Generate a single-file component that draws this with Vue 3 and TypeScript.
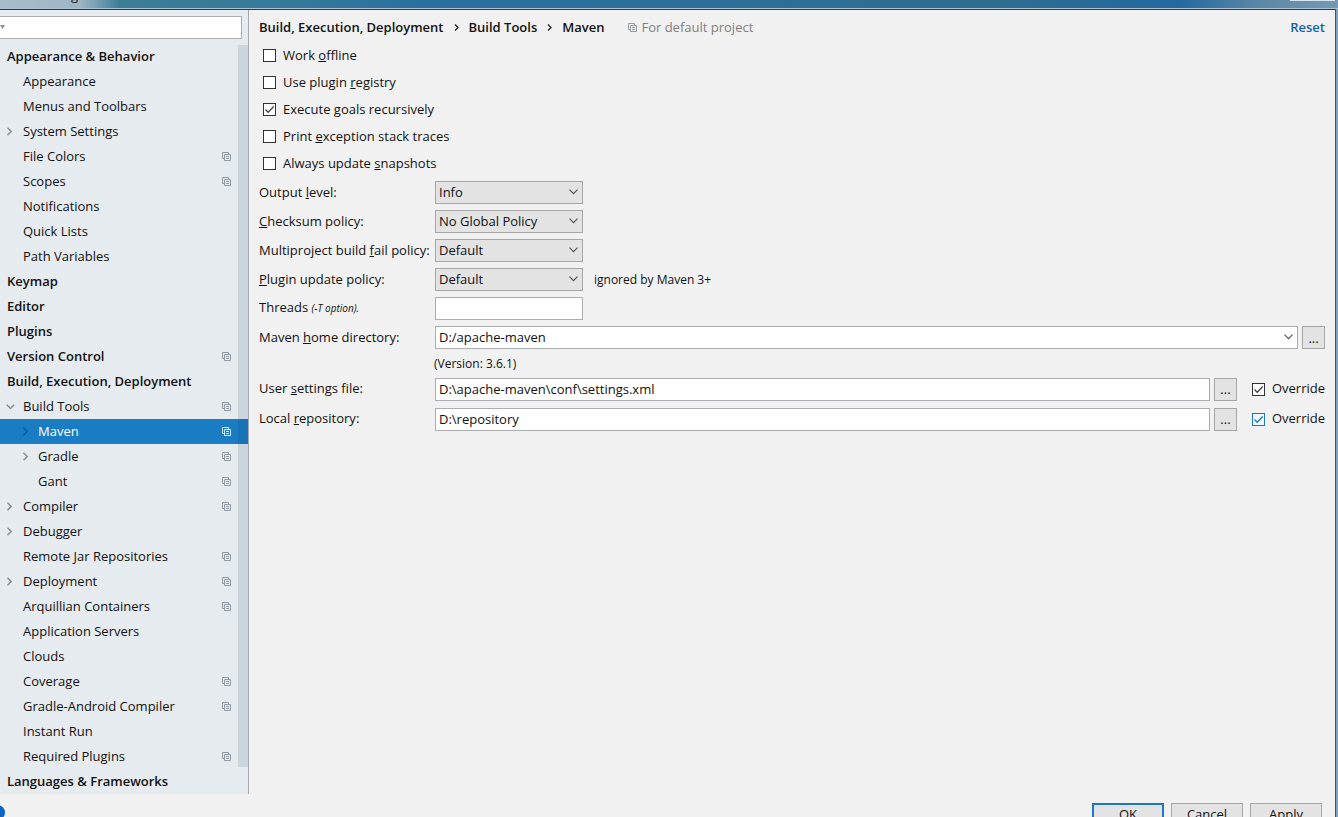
<script setup lang="ts">
import { ref } from 'vue'

interface TreeItem {
  label: string
  level: 0 | 1 | 2
  arrow?: 'right' | 'down'
  project?: boolean
  selected?: boolean
}

const items: TreeItem[] = [
  { label: 'Appearance & Behavior', level: 0 },
  { label: 'Appearance', level: 1 },
  { label: 'Menus and Toolbars', level: 1 },
  { label: 'System Settings', level: 1, arrow: 'right' },
  { label: 'File Colors', level: 1, project: true },
  { label: 'Scopes', level: 1, project: true },
  { label: 'Notifications', level: 1 },
  { label: 'Quick Lists', level: 1 },
  { label: 'Path Variables', level: 1 },
  { label: 'Keymap', level: 0 },
  { label: 'Editor', level: 0 },
  { label: 'Plugins', level: 0 },
  { label: 'Version Control', level: 0, project: true },
  { label: 'Build, Execution, Deployment', level: 0 },
  { label: 'Build Tools', level: 1, arrow: 'down', project: true },
  { label: 'Maven', level: 2, arrow: 'right', project: true, selected: true },
  { label: 'Gradle', level: 2, arrow: 'right', project: true },
  { label: 'Gant', level: 2, project: true },
  { label: 'Compiler', level: 1, arrow: 'right', project: true },
  { label: 'Debugger', level: 1, arrow: 'right' },
  { label: 'Remote Jar Repositories', level: 1, project: true },
  { label: 'Deployment', level: 1, arrow: 'right', project: true },
  { label: 'Arquillian Containers', level: 1, project: true },
  { label: 'Application Servers', level: 1 },
  { label: 'Clouds', level: 1 },
  { label: 'Coverage', level: 1, project: true },
  { label: 'Gradle-Android Compiler', level: 1, project: true },
  { label: 'Instant Run', level: 1 },
  { label: 'Required Plugins', level: 1, project: true },
  { label: 'Languages & Frameworks', level: 0 },
]

// Each label is split around its mnemonic letter.
type Mnemonic = [string, string, string]

const checks = ref<{ id: string; text: Mnemonic; on: boolean }[]>([
  { id: 'offline', text: ['Work ', 'o', 'ffline'], on: false },
  { id: 'registry', text: ['Use plugin ', 'r', 'egistry'], on: false },
  { id: 'recursive', text: ['Execute ', 'g', 'oals recursively'], on: true },
  { id: 'traces', text: ['Print ', 'e', 'xception stack traces'], on: false },
  { id: 'snapshots', text: ['Always update ', 's', 'napshots'], on: false },
])

const selects = ref<{ id: string; text: Mnemonic; value: string; options: string[]; note?: string }[]>([
  { id: 'output', text: ['Output ', 'l', 'evel:'], value: 'Info', options: ['Info'] },
  { id: 'checksum', text: ['', 'C', 'hecksum policy:'], value: 'No Global Policy', options: ['No Global Policy'] },
  { id: 'fail', text: ['Multiproject build ', 'f', 'ail policy:'], value: 'Default', options: ['Default'] },
  { id: 'update', text: ['', 'P', 'lugin update policy:'], value: 'Default', options: ['Default'], note: 'ignored by Maven 3+' },
])

const paths = ref<{ id: string; text: Mnemonic; value: string; override: boolean; focused: boolean }[]>([
  { id: 'settings', text: ['User ', 's', 'ettings file:'], value: 'D:\\apache-maven\\conf\\settings.xml', override: true, focused: false },
  { id: 'repository', text: ['Local ', 'r', 'epository:'], value: 'D:\\repository', override: true, focused: true },
])

const home = ref('D:/apache-maven')
const threads = ref('')
const query = ref('')
</script>

<template>
  <div class="window">
    <header class="titlebar"><span class="caption">Settings</span><span class="winbuttons"></span></header>
    <div class="frame">
      <div class="body">
        <nav class="sidebar">
          <div class="search">
            <svg class="caret" width="6" height="4" viewBox="0 0 6 4"><path d="M0 0H5L2.5 4Z" fill="#8a8f94" /></svg>
            <input v-model="query" class="search-input" type="text" aria-label="Search settings" />
          </div>
          <ul class="tree">
            <li
              v-for="item in items"
              :key="item.label"
              class="row"
              :class="['level' + item.level, { selected: item.selected }]"
            >
              <span class="gutter">
                <svg v-if="item.arrow === 'right'" width="9" height="9" viewBox="0 0 9 9"><path class="arrow" d="M1.5 0.8 5.2 4.5 1.5 8.2" /></svg>
                <svg v-if="item.arrow === 'down'" width="9" height="9" viewBox="0 0 9 9"><path class="arrow" d="M0.8 2.8 4.5 6.5 8.2 2.8" /></svg>
              </span>
              <span class="name">{{ item.label }}</span>
              <svg v-if="item.project" class="copy" width="9" height="9" viewBox="0 0 9 9">
                <path d="M2 6.5H0.5V0.5H6.5V2M2.5 2.5H8.5V8.5H2.5ZM4 4.5H7M4 6.5H7" />
              </svg>
            </li>
          </ul>
          <span class="scrollbar"></span>
        </nav>

        <main class="content">
          <div class="heading">
            <h1 class="crumbs">
              <span>Build, Execution, Deployment</span>
              <svg width="5" height="7" viewBox="0 0 5 7"><path d="M1 0.5 4 3.5 1 6.5" /></svg>
              <span>Build Tools</span>
              <svg width="5" height="7" viewBox="0 0 5 7"><path d="M1 0.5 4 3.5 1 6.5" /></svg>
              <span>Maven</span>
            </h1>
            <span class="scope">
              <svg class="copy" width="9" height="9" viewBox="0 0 9 9">
                <path d="M2 6.5H0.5V0.5H6.5V2M2.5 2.5H8.5V8.5H2.5ZM4 4.5H7M4 6.5H7" />
              </svg>
              For default project
            </span>
            <a class="reset" href="#">Reset</a>
          </div>

          <div class="checks">
            <label v-for="c in checks" :key="c.id" class="check">
              <input v-model="c.on" class="box" type="checkbox" />
              <span class="text">{{ c.text[0] }}<u>{{ c.text[1] }}</u>{{ c.text[2] }}</span>
            </label>
          </div>

          <form class="form" @submit.prevent>
            <div v-for="s in selects" :key="s.id" class="line">
              <label class="label" :for="s.id">{{ s.text[0] }}<u>{{ s.text[1] }}</u>{{ s.text[2] }}</label>
              <span class="combo short">
                <select :id="s.id" v-model="s.value" class="field select">
                  <option v-for="o in s.options" :key="o">{{ o }}</option>
                </select>
                <svg class="drop" width="9" height="6" viewBox="0 0 9 6"><path d="M0.5 0.7 4.5 4.7 8.5 0.7" /></svg>
              </span>
              <span v-if="s.note" class="note">{{ s.note }}</span>
            </div>

            <div class="line">
              <label class="label" for="threads">Threads <i class="hint">(-T option).</i></label>
              <input id="threads" v-model="threads" class="field short" type="text" />
            </div>

            <div class="line">
              <label class="label" for="home">Maven <u>h</u>ome directory:</label>
              <span class="combo wide">
                <input id="home" v-model="home" class="field" type="text" />
                <svg class="drop" width="9" height="6" viewBox="0 0 9 6"><path d="M0.5 0.7 4.5 4.7 8.5 0.7" /></svg>
              </span>
              <button class="browse" type="button" aria-label="Browse Maven home directory">...</button>
            </div>

            <div class="version">(Version: 3.6.1)</div>

            <div v-for="p in paths" :key="p.id" class="line path">
              <label class="label" :for="p.id">{{ p.text[0] }}<u>{{ p.text[1] }}</u>{{ p.text[2] }}</label>
              <input :id="p.id" v-model="p.value" class="field wide" type="text" />
              <button class="browse" type="button" aria-label="Browse">...</button>
              <label class="check override">
                <input v-model="p.override" class="box" :class="{ focused: p.focused }" type="checkbox" />
                <span class="text">Override</span>
              </label>
            </div>
          </form>
        </main>
      </div>

      <footer class="footer">
        <span class="help"></span>
        <button class="action primary" type="button">OK</button>
        <button class="action" type="button">Cancel</button>
        <button class="action" type="button">Apply</button>
      </footer>
    </div>
  </div>
</template>

<style>
html,
body {
  margin: 0;
  overflow: hidden;
}
</style>

<style scoped>
* {
  box-sizing: border-box;
}

.window {
  display: flex;
  flex-direction: column;
  height: 100vh;
  overflow: hidden;
  background: #7fa3c4;
  color: #111;
  font: 13px/18px "Open Sans", "Noto Sans", sans-serif;
}

input,
select,
button {
  font: inherit;
  color: inherit;
  margin: 0;
}

svg {
  flex: none;
  fill: none;
}

.titlebar {
  display: flex;
  flex: none;
  align-items: flex-end;
  justify-content: space-between;
  height: 9px;
  padding: 0 3px 6px 36px;
  overflow: hidden;
  border-bottom: 1px solid #a9c3d6;
  background: linear-gradient(90deg, #a9bccb 0, #9fb5c5 80px, #3d7d96 120px, #35789a 300px, #2b6f9f 420px, #2f6c90 75%, #23689f 88%, #5b87a6 94%, #7698b2 100%);
}

.caption {
  line-height: 14px;
}

.winbuttons {
  align-self: flex-start;
  width: 45px;
  height: 1px;
  background: #d5e4ee;
}

.frame {
  display: flex;
  flex: 1;
  flex-direction: column;
  min-height: 0;
  margin-right: 2px;
  border-top: 1px solid #1d3d57;
  border-right: 1px solid #2c5a85;
  background: #f1f1f1;
}

.body {
  display: flex;
  flex: none;
}

.sidebar {
  position: relative;
  flex: none;
  width: 249px;
  padding-top: 6px;
  border-right: 1px solid #a5a9ad;
  background: #e6ebf0;
}

.search {
  position: relative;
  width: 242px;
  height: 23px;
  margin-bottom: 5px;
}

.search-input {
  display: block;
  width: 100%;
  height: 100%;
  padding: 0 12px;
  border: 1px solid #abadb0;
  border-left: 0;
  background: #fff;
}

.caret {
  position: absolute;
  top: 9px;
  left: 0;
}

.tree {
  margin: 0;
  padding: 0;
  list-style: none;
}

.row {
  display: flex;
  align-items: center;
  height: 25px;
  padding-right: 17px;
}

.gutter {
  display: flex;
  flex: none;
  align-items: center;
  justify-content: flex-start;
  width: 23px;
  padding-left: 6px;
}

.level0 {
  font-weight: 600;
}

.level0 .gutter {
  width: 7px;
  padding: 0;
}

.level2 .gutter {
  width: 38px;
  padding-left: 22px;
}

.name {
  flex: 1;
  padding-bottom: 2px;
  white-space: nowrap;
}

.arrow {
  stroke: #8a8f95;
  stroke-width: 1.5;
}

.copy {
  stroke: #929ba3;
}

.selected {
  background: #1a7dc4;
  color: #fff;
}

.selected .arrow {
  stroke: #0c5a9c;
}

.selected .copy {
  stroke: #d5e8f6;
}

.scrollbar {
  position: absolute;
  top: 35px;
  right: 0;
  bottom: 27px;
  width: 10px;
  background: rgba(0, 35, 65, 0.11);
}

.content {
  flex: 1;
  min-width: 0;
  padding: 6px 10px 0 10px;
}

.heading {
  display: flex;
  align-items: center;
  height: 22px;
  margin-bottom: 4px;
}

.crumbs {
  display: flex;
  align-items: center;
  gap: 10px;
  margin: 0;
  font-size: 13px;
  font-weight: 600;
}

.crumbs svg {
  stroke: #222;
  stroke-width: 1.3;
}

.scope {
  display: flex;
  align-items: center;
  gap: 4px;
  margin-left: 24px;
  color: #808080;
}

.reset {
  margin-left: auto;
  color: #0f62ac;
  font-weight: 600;
  text-decoration: none;
}

.check {
  display: flex;
  align-items: center;
  height: 27px;
  white-space: nowrap;
}

.checks .check {
  padding-left: 4px;
}

.text {
  padding-bottom: 2px;
}

.box {
  flex: none;
  width: 13px;
  height: 13px;
  margin-right: 7px;
  appearance: none;
  border: 1px solid #333;
  background: #fff;
}

.box:checked {
  background: #fff url("data:image/svg+xml,%3Csvg xmlns='http://www.w3.org/2000/svg' viewBox='0 0 11 11'%3E%3Cpath d='M1.5 5.5 4.2 8.2 9.7 2.5' fill='none' stroke='%23444' stroke-width='1.3'/%3E%3C/svg%3E");
}

.box.focused {
  border-color: #1a78bf;
}

.box.focused:checked {
  background: #eef7fe url("data:image/svg+xml,%3Csvg xmlns='http://www.w3.org/2000/svg' viewBox='0 0 11 11'%3E%3Cpath d='M1.5 5.5 4.2 8.2 9.7 2.5' fill='none' stroke='%231a78bf' stroke-width='1.3'/%3E%3C/svg%3E");
}

.form {
  padding-top: 1px;
}

.line {
  display: flex;
  align-items: center;
  height: 29px;
}

.line.path {
  height: 30px;
}

.label {
  flex: none;
  width: 176px;
  padding-bottom: 2px;
  white-space: nowrap;
}

.hint {
  font-size: 10px;
}

.field {
  height: 23px;
  padding: 0 3px 1px;
  border: 1px solid #abadb0;
  border-radius: 0;
  background: #fff;
}

.short {
  flex: none;
  width: 148px;
}

.wide {
  flex: 1;
  min-width: 0;
}

.combo {
  position: relative;
  display: flex;
}

.combo .field {
  width: 100%;
}

.select {
  appearance: none;
  border-color: #a6a6a6;
  background: #e3e3e3;
}

.drop {
  position: absolute;
  top: 8px;
  right: 5px;
  stroke: #555;
  stroke-width: 1.2;
  pointer-events: none;
}

.note {
  margin-left: 11px;
  font-size: 12px;
}

.browse {
  flex: none;
  width: 23px;
  height: 23px;
  margin-left: 4px;
  padding: 0;
  border: 1px solid #a6a6a6;
  background: #e3e3e3;
}

.version {
  height: 22px;
  padding-left: 175px;
  font-size: 12px;
  line-height: 24px;
}

.override {
  margin-left: 15px;
}

.footer {
  display: flex;
  flex: none;
  gap: 7px;
  padding: 9px 13px 9px 0;
}

.help {
  width: 15px;
  height: 15px;
  margin: 2px auto 0 -10px;
  border-radius: 50%;
  background: #0b63c4;
}

.action {
  width: 72px;
  height: 24px;
  padding: 0 0 2px;
  border: 1px solid #a6a6a6;
  background: #e3e3e3;
}

.primary {
  border: 2px solid #1a78bf;
}
</style>
